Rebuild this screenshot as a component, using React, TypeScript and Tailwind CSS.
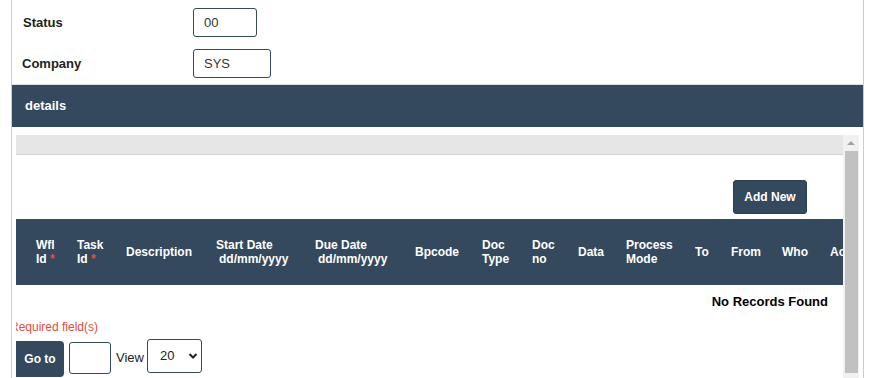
import React from "react";

const columns: { label: React.ReactNode; w: string }[] = [
  { label: <>Wfl<br />Id <span className="text-[#e74c3c]">*</span></>, w: "w-[41px]" },
  { label: <>Task<br />Id <span className="text-[#e74c3c]">*</span></>, w: "w-[49px]" },
  { label: <>Description</>, w: "w-[90px]" },
  { label: <>Start Date<br /><span className="pl-[3px]">dd/mm/yyyy</span></>, w: "w-[99px]" },
  { label: <>Due Date<br /><span className="pl-[3px]">dd/mm/yyyy</span></>, w: "w-[100px]" },
  { label: <>Bpcode</>, w: "w-[67px]" },
  { label: <>Doc<br />Type</>, w: "w-[50px]" },
  { label: <>Doc<br />no</>, w: "w-[46px]" },
  { label: <>Data</>, w: "w-[48px]" },
  { label: <>Process<br />Mode</>, w: "w-[69px]" },
  { label: <>To</>, w: "w-[36px]" },
  { label: <>From</>, w: "w-[51px]" },
  { label: <>Who</>, w: "w-[48px]" },
  { label: <>Action</>, w: "w-[60px]" },
];

export default function App() {
  return (
    <div className="min-h-screen bg-white font-['Liberation_Sans',Arial,sans-serif] text-[#333]">
      <div className="ml-[11px] w-[853px] h-[378px] border-x border-[#cccccc] overflow-hidden">
        {/* Header form */}
        <div className="border-b border-[#dddddd] pt-[8px] pb-[6px]">
          <div className="flex items-center">
            <div className="w-[181px] pl-[11px] text-[13px] font-bold text-[#222]">Status</div>
            <div className="w-[64px] h-[29px] border border-[#34495e] rounded-[3px] pl-[10px] flex items-center text-[13px]">
              00
            </div>
          </div>
          <div className="flex items-center mt-[12px]">
            <div className="w-[181px] pl-[10px] text-[13px] font-bold text-[#222]">Company</div>
            <div className="w-[78px] h-[29px] border border-[#34495e] rounded-[3px] pl-[10px] flex items-center text-[13px]">
              SYS
            </div>
          </div>
        </div>

        {/* Section bar */}
        <div className="h-[42px] bg-[#34495e] flex items-center pl-[13px] text-white text-[13px] font-bold">
          details
        </div>

        {/* Grid area */}
        <div className="px-[4px] pt-[8px] flex">
          <div className="w-[827px] overflow-hidden">
            <div className="h-[20px] bg-[#e6e6e6] border-b border-[#d4d4d4]" />

            <div className="flex justify-end pr-[36px] mt-[25px]">
              <button className="w-[74px] h-[34px] rounded-[3px] bg-[#34495e] border border-[#2c3e50] text-white text-[12px] font-bold">
                Add New
              </button>
            </div>

            <div className="mt-[5px] h-[66px] bg-[#34495e] flex items-center pl-[20px] text-white text-[12px] font-bold leading-[14px] whitespace-nowrap">
              {columns.map((c, i) => (
                <div key={i} className={`${c.w} flex-none`}>
                  {c.label}
                </div>
              ))}
            </div>

            <div className="h-[34px] flex items-center justify-end pr-[15px] text-[13px] font-bold text-black">
              No Records Found
            </div>

            <div className="h-[16px] flex items-center -ml-[6px] text-[12px] text-[#e74c3c]">
              Required field(s)
            </div>

            <div className="flex items-start mt-[6px]">
              <button className="w-[48px] h-[36px] bg-[#34495e] rounded-r-[4px] text-white text-[12px] font-bold">
                Go to
              </button>
              <div className="ml-[5px] mt-[1px] w-[42px] h-[32px] border border-[#34495e] rounded-[3px]" />
              <div className="ml-[5px] h-[34px] flex items-center text-[13px] text-[#222]">View</div>
              <div className="ml-[3px] -mt-[2px] w-[55px] h-[34px] border border-[#34495e] rounded-[3px] flex items-center pl-[12px] text-[13px] text-[#222]">
                <span>20</span>
                <svg className="ml-[14px]" width="10" height="8" viewBox="0 0 10 8">
                  <path d="M1.5 2 L5 5.5 L8.5 2" fill="none" stroke="#222" strokeWidth="2" />
                </svg>
              </div>
            </div>
          </div>

          {/* Scrollbar */}
          <div className="w-[16px] h-[250px] bg-[#f1f1f1] flex flex-col items-center">
            <div className="h-[16px] flex items-center justify-center">
              <div className="w-0 h-0 border-x-[4px] border-x-transparent border-b-[4px] border-b-[#a3a3a3]" />
            </div>
            <div className="w-[13px] h-[222px] bg-[#c1c1c1]" />
          </div>
        </div>
      </div>
    </div>
  );
}
